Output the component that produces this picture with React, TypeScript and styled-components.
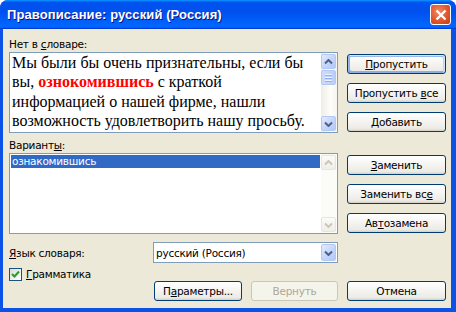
import React from "react"
import styled, { createGlobalStyle } from "styled-components"

const GlobalStyle = createGlobalStyle`
  html, body {
    margin: 0;
    padding: 0;
    background: #ffffff;
  }
  body {
    font-family: Tahoma, "DejaVu Sans", sans-serif;
    font-size: 10.5px;
    letter-spacing: -0.25px;
    color: #000;
  }
`

const Window = styled.div`
  width: 456px;
  height: 312px;
  box-sizing: border-box;
  display: flex;
  flex-direction: column;
  background: #0b53e6;
  border-radius: 8px 8px 0 0;
  overflow: hidden;
`

const TitleBar = styled.div`
  height: 29px;
  flex: none;
  display: flex;
  align-items: center;
  padding: 0 5px 0 7px;
  background: linear-gradient(
    180deg,
    #0997ff,
    #0053ee 8%,
    #0050ee 40%,
    #0066ff 88%,
    #0066ff 93%,
    #005bff 95%,
    #003dd7 96%,
    #003dd7
  );
`

const Title = styled.div`
  font-family: "Liberation Sans", Arial, sans-serif;
  font-weight: bold;
  font-size: 13px;
  letter-spacing: 0.1px;
  color: #fff;
  text-shadow: 1px 1px #0f1089;
`

const CloseButton = styled.div`
  margin-left: auto;
  width: 21px;
  height: 21px;
  box-sizing: border-box;
  border: 1px solid #fff;
  border-radius: 3px;
  background: radial-gradient(circle at 40% 35%, #f08a66, #e0562b 55%, #c23f17);
  display: flex;
  align-items: center;
  justify-content: center;
`

const Client = styled.div`
  flex: 1;
  margin: 0 5px 4px 3px;
  background: #ece9d8;
  padding: 9px 0 0 6px;
`

const Section = styled.div<{ $top: number }>`
  display: grid;
  grid-template-columns: 329px 99px;
  column-gap: 9px;
  margin-top: ${(p) => p.$top}px;
`

const Column = styled.div`
  display: flex;
  flex-direction: column;
`

const Buttons = styled.div`
  display: flex;
  flex-direction: column;
  gap: 9px;
  padding-top: 16px;
`

const Label = styled.div`
  height: 14px;
  line-height: 13px;
  white-space: nowrap;
`

const Key = styled.span`
  text-decoration: underline;
`

const Field = styled.div`
  height: 81px;
  box-sizing: border-box;
  border: 1px solid #7f9db9;
  background: #fff;
  display: flex;
`

const Sentence = styled.div`
  flex: 1;
  padding: 0 0 0 2px;
  font-family: "Liberation Serif", "Times New Roman", serif;
  font-size: 16px;
  letter-spacing: 0;
  line-height: 19.4px;
  white-space: nowrap;
  overflow: hidden;
`

const Wrong = styled.span`
  color: #ff0000;
  font-weight: bold;
`

const List = styled.div`
  flex: 1;
  padding: 1px;
`

const Item = styled.div<{ $selected?: boolean }>`
  height: 13px;
  line-height: 13px;
  padding-left: 1px;
  background: ${(p) => (p.$selected ? "#316ac5" : "transparent")};
  color: ${(p) => (p.$selected ? "#fff" : "#000")};
`

const ScrollBar = styled.div<{ $disabled?: boolean }>`
  width: 16px;
  flex: none;
  display: flex;
  flex-direction: column;
  padding: 1px 0;
  box-sizing: border-box;
  background: ${(p) =>
    p.$disabled ? "#fbfbf8" : "linear-gradient(90deg, #eeede5, #fdfdfa 60%, #f6f5f0)"};
`

const ScrollButton = styled.div<{ $disabled?: boolean }>`
  width: 15px;
  height: 15px;
  box-sizing: border-box;
  border: 1px solid ${(p) => (p.$disabled ? "#e8e6dc" : "#b5c8f3")};
  border-radius: 2px;
  background: ${(p) =>
    p.$disabled
      ? "linear-gradient(180deg, #fbfbf8, #efeee7)"
      : "linear-gradient(135deg, #e3ecfe, #c6d6fc 50%, #b3c8f7)"};
  display: flex;
  align-items: center;
  justify-content: center;
`

const Thumb = styled.div`
  width: 15px;
  height: 15px;
  margin-top: 1px;
  box-sizing: border-box;
  border: 1px solid #b5c8f3;
  border-radius: 2px;
  background: linear-gradient(90deg, #cbdafc, #c6d6fc 50%, #b9cdf8);
  display: flex;
  flex-direction: column;
  align-items: center;
  justify-content: center;
  gap: 1px;
`

const Grip = styled.div`
  width: 7px;
  height: 1px;
  background: #eef3fe;
  box-shadow: 0 1px #8cb0f8;
  margin-bottom: 1px;
`

const Spacer = styled.div`
  flex: 1;
`

const Button = styled.div<{ $width?: number; $default?: boolean; $disabled?: boolean }>`
  width: ${(p) => (p.$width ? `${p.$width}px` : "100%")};
  height: 20px;
  box-sizing: border-box;
  border: 1px solid ${(p) => (p.$disabled ? "#c9c7ba" : "#003c74")};
  border-radius: 3px;
  background: ${(p) =>
    p.$disabled ? "#f5f4ea" : "linear-gradient(180deg, #fff, #ecebe6 86%, #d6d0c5)"};
  color: ${(p) => (p.$disabled ? "#aca899" : "#000")};
  box-shadow: ${(p) =>
    p.$default
      ? "inset -1px 1px #cee7ff, inset 1px 2px #98b8ea, inset -2px 2px #bcd4f6, inset 1px -1px #89ade4, inset 2px -2px #89ade4"
      : "none"};
  display: flex;
  align-items: center;
  justify-content: center;
  white-space: nowrap;
`

const Bottom = styled.div`
  display: grid;
  grid-template-columns: 329px 99px;
  grid-template-rows: 21px 18px 20px;
  column-gap: 9px;
  margin-top: 8px;
`

const LangRow = styled.div`
  display: flex;
  align-items: center;
`

const Combo = styled.div`
  margin-left: auto;
  width: 185px;
  height: 21px;
  box-sizing: border-box;
  border: 1px solid #7f9db9;
  background: #fff;
  display: flex;
  align-items: center;
  padding: 0 1px 0 2px;
`

const ComboText = styled.div`
  flex: 1;
`

const ComboButton = styled.div`
  width: 15px;
  height: 17px;
  box-sizing: border-box;
  border: 1px solid #b5c8f3;
  border-radius: 2px;
  background: linear-gradient(135deg, #e3ecfe, #c6d6fc 50%, #b3c8f7);
  display: flex;
  align-items: center;
  justify-content: center;
`

const CheckRow = styled.div`
  display: flex;
  align-items: flex-end;
  gap: 4px;
  line-height: 13px;
`

const CheckBox = styled.div`
  width: 13px;
  height: 13px;
  box-sizing: border-box;
  border: 1px solid #1c5180;
  background: linear-gradient(135deg, #dcdcd7, #fff);
  display: flex;
  align-items: center;
  justify-content: center;
`

const ButtonRow = styled.div<{ $end?: boolean }>`
  display: flex;
  gap: 9px;
  justify-content: ${(p) => (p.$end ? "flex-end" : "flex-start")};
`

const Chevron: React.FC<{ down?: boolean; color?: string }> = ({ down, color = "#4d6185" }) => (
  <svg width="9" height="6" viewBox="0 0 9 6">
    <polyline
      points={down ? "1,1.5 4.5,5 8,1.5" : "1,4.5 4.5,1 8,4.5"}
      fill="none"
      stroke={color}
      strokeWidth="2"
    />
  </svg>
)

const App: React.FC = () => {
  return (
    <>
      <GlobalStyle />
      <Window>
        <TitleBar>
          <Title>Правописание: русский (Россия)</Title>
          <CloseButton>
            <svg width="12" height="12" viewBox="0 0 12 12">
              <path d="M1.5 1.5 L10.5 10.5 M10.5 1.5 L1.5 10.5" stroke="#fff" strokeWidth="2.4" />
            </svg>
          </CloseButton>
        </TitleBar>
        <Client>
          <Section $top={0}>
            <Column>
              <Label>
                Нет в <Key>с</Key>ловаре:
              </Label>
              <Field>
                <Sentence>
                  Мы были бы очень признательны, если бы
                  <br />
                  вы, <Wrong>ознокомившись</Wrong> с краткой
                  <br />
                  информацией о нашей фирме, нашли
                  <br />
                  возможность удовлетворить нашу просьбу.
                </Sentence>
                <ScrollBar>
                  <ScrollButton>
                    <Chevron />
                  </ScrollButton>
                  <Thumb>
                    <Grip />
                    <Grip />
                    <Grip />
                  </Thumb>
                  <Spacer />
                  <ScrollButton>
                    <Chevron down />
                  </ScrollButton>
                </ScrollBar>
              </Field>
            </Column>
            <Buttons>
              <Button $default>
                <span>
                  <Key>П</Key>ропустить
                </span>
              </Button>
              <Button>
                <span>
                  Пропустить <Key>в</Key>се
                </span>
              </Button>
              <Button>
                <span>
                  <Key>Д</Key>обавить
                </span>
              </Button>
            </Buttons>
          </Section>
          <Section $top={6}>
            <Column>
              <Label>
                Вариант<Key>ы</Key>:
              </Label>
              <Field>
                <List>
                  <Item $selected>ознакомившись</Item>
                </List>
                <ScrollBar $disabled>
                  <ScrollButton $disabled>
                    <Chevron color="#c9c7ba" />
                  </ScrollButton>
                  <Spacer />
                  <ScrollButton $disabled>
                    <Chevron down color="#c9c7ba" />
                  </ScrollButton>
                </ScrollBar>
              </Field>
            </Column>
            <Buttons>
              <Button>
                <span>
                  <Key>З</Key>аменить
                </span>
              </Button>
              <Button>
                <span>
                  Заменить вс<Key>е</Key>
                </span>
              </Button>
              <Button>
                <span>
                  Ав<Key>т</Key>озамена
                </span>
              </Button>
            </Buttons>
          </Section>
          <Bottom>
            <LangRow>
              <span>
                <Key>Я</Key>зык словаря:
              </span>
              <Combo>
                <ComboText>русский (Россия)</ComboText>
                <ComboButton>
                  <Chevron down />
                </ComboButton>
              </Combo>
            </LangRow>
            <div />
            <CheckRow>
              <CheckBox>
                <svg width="9" height="9" viewBox="0 0 9 9">
                  <polyline points="1,4 3.5,6.5 8,1.5" fill="none" stroke="#21a121" strokeWidth="2" />
                </svg>
              </CheckBox>
              <span>
                <Key>Г</Key>рамматика
              </span>
            </CheckRow>
            <div />
            <ButtonRow $end>
              <Button $width={88}>
                <span>
                  П<Key>а</Key>раметры...
                </span>
              </Button>
              <Button $width={87} $disabled>
                Вернуть
              </Button>
            </ButtonRow>
            <ButtonRow>
              <Button>Отмена</Button>
            </ButtonRow>
          </Bottom>
        </Client>
      </Window>
    </>
  )
}

export default App
